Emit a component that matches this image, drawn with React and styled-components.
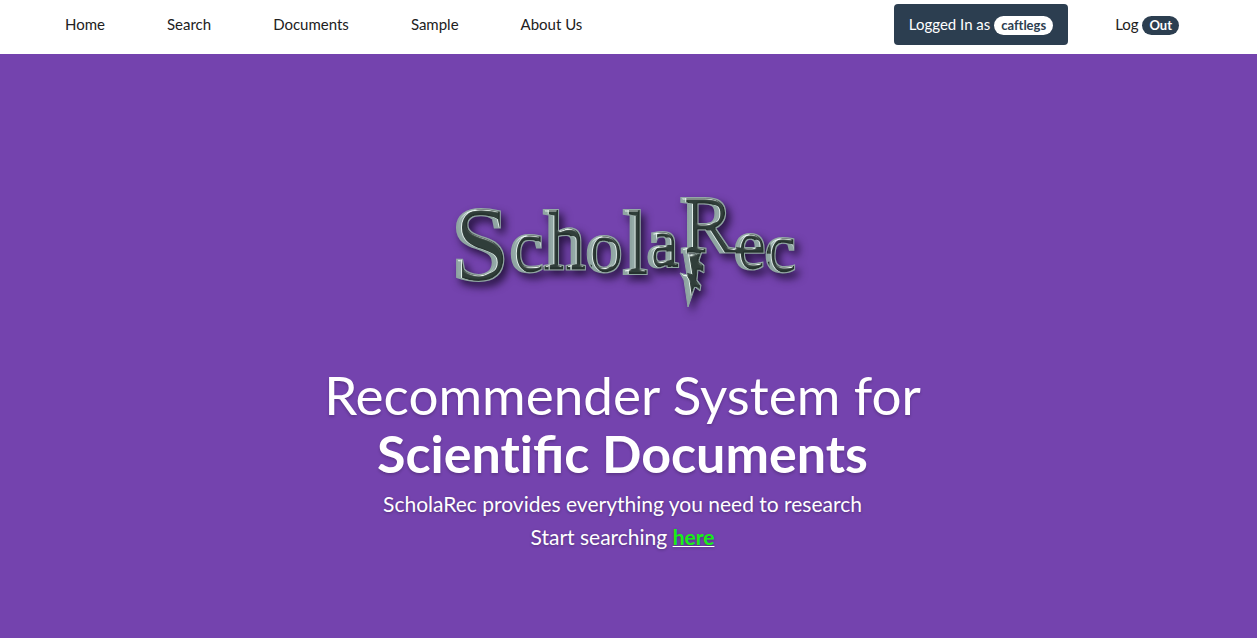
import React from "react";
import styled, { createGlobalStyle } from "styled-components";

const GlobalStyle = createGlobalStyle`
  *, *::before, *::after { box-sizing: border-box; }
  body {
    margin: 0;
    background: #7443ae;
    color: #212121;
    font-family: Lato, "Liberation Sans", sans-serif;
    font-size: 15px;
    line-height: 21px;
  }
  #root { min-height: 100vh; display: flex; flex-direction: column; }
`;

const NavBar = styled.header`
  display: flex;
  justify-content: space-between;
  align-items: flex-start;
  min-height: 54px;
  padding: 4px 78px 0 65px;
  background: #fff;
`;

const NavLinks = styled.nav`
  display: flex;
  gap: 62px;
  padding: 10px 0;
`;

const NavLink = styled.a`
  color: #212121;
  text-decoration: none;
`;

const Account = styled.div`
  display: flex;
  align-items: center;
  gap: 47px;
`;

const UserButton = styled.button`
  padding: 10px 15px;
  border: 0;
  border-radius: 4px;
  background: #2c3e50;
  color: #fff;
  font: inherit;
  cursor: pointer;
`;

const Pill = styled.span`
  display: inline-block;
  padding: 0 7px;
  border-radius: 10px;
  background: ${({ $light }) => ($light ? "#fff" : "#2c3e50")};
  color: ${({ $light }) => ($light ? "#2c3e50" : "#fff")};
  font-size: 13px;
  font-weight: 700;
  font-variant-ligatures: none;
  line-height: 19px;
`;

const Hero = styled.main`
  flex: 1;
  display: flex;
  flex-direction: column;
  align-items: center;
  padding: 116px 12px 80px 0;
  background: #7443ae;
  color: #fff;
  text-align: center;
`;

const Logo = styled.svg`
  display: block;
  width: 360px;
  height: 150px;
  margin-bottom: 46px;
  overflow: visible;
`;

const Title = styled.h1`
  margin: 0 0 5px;
  font-size: 53px;
  font-weight: 400;
  line-height: 58px;
  text-shadow: 0 2px 3px rgba(0, 0, 0, 0.2);
`;

const TitleStrong = styled.strong`
  font-size: 52px;
`;

const PlainLetters = styled.span`
  font-variant-ligatures: none;
`;

const Lead = styled.p`
  margin: 0;
  font-size: 21px;
  line-height: 33px;
  text-shadow: 0 1px 3px rgba(0, 0, 0, 0.3);
`;

const SearchLink = styled.a`
  color: #18f018;
  font-weight: 700;
  text-decoration: underline 1px #fff;
`;

const links = ["Home", "Search", "Documents", "Sample", "About Us"];

const letters = [
  ["S", 8, 109, 104],
  ["c", 67, 101, 74],
  ["h", 101, 98, 82],
  ["o", 143, 101, 72],
  ["l", 180, 103, 88],
  ["a", 204, 96, 70],
  ["R", 237, 82, 80],
  ["e", 291, 98, 70],
  ["c", 322, 101, 68],
];

function ScholaRecLogo() {
  return (
    <Logo viewBox="0 0 360 150" role="img" aria-label="ScholaRec">
      <defs>
        <filter id="bevel" filterUnits="userSpaceOnUse" x="0" y="0" width="380" height="160" colorInterpolationFilters="sRGB">
          <feMorphology in="SourceAlpha" operator="erode" radius="1" result="inner" />
          <feOffset in="SourceAlpha" dx="5" dy="0" result="ridgeShift" />
          <feFlood floodColor="#e2efea" />
          <feComposite in2="ridgeShift" operator="in" />
          <feComposite in2="inner" operator="in" result="ridge" />
          <feOffset in="SourceAlpha" dx="6" dy="0" result="shifted" />
          <feFlood floodColor="#26332f" />
          <feComposite in2="shifted" operator="in" />
          <feComposite in2="inner" operator="in" result="darkFacet" />
          <feGaussianBlur in="SourceAlpha" stdDeviation="1" result="height" />
          <feSpecularLighting in="height" surfaceScale="3" specularConstant="1" specularExponent="20" lightingColor="#eef8f4" result="shine">
            <feDistantLight azimuth="260" elevation="30" />
          </feSpecularLighting>
          <feComposite in="shine" in2="SourceAlpha" operator="in" result="edge" />
          <feMerge result="metal">
            <feMergeNode in="SourceGraphic" />
            <feMergeNode in="ridge" />
            <feMergeNode in="darkFacet" />
            <feMergeNode in="edge" />
          </feMerge>
          <feDropShadow in="metal" dx="4" dy="5" stdDeviation="4" floodColor="#170b2a" floodOpacity="0.85" />
        </filter>
      </defs>
      <g filter="url(#bevel)" fill="#8fa5a2" stroke="#8fa5a2" strokeWidth="4" strokeLinejoin="miter">
        <text fontFamily="'Liberation Serif', serif">
          {letters.map(([glyph, x, y, size], i) => (
            <tspan key={i} x={x} y={y} fontSize={size}>{glyph}</tspan>
          ))}
        </text>
        <path strokeWidth="1" d="M240 80L247 85L259 82L256 91L261 95L261 103L255 100L254 110L258 115L257 121L252 117L245 137L241 110L237 103L244 105Z" />
      </g>
    </Logo>
  );
}

export default function App() {
  return (
    <>
      <GlobalStyle />
      <NavBar>
        <NavLinks aria-label="Main">
          {links.map((label) => (
            <NavLink key={label} href="#">{label}</NavLink>
          ))}
        </NavLinks>
        <Account>
          <UserButton type="button">Logged In as <Pill $light>caftlegs</Pill></UserButton>
          <NavLink href="#">Log <Pill>Out</Pill></NavLink>
        </Account>
      </NavBar>
      <Hero>
        <ScholaRecLogo />
        <Title>
          Recommender System for<br />
          <TitleStrong><PlainLetters>Scient</PlainLetters>ific Documents</TitleStrong>
        </Title>
        <Lead>
          ScholaRec provides everything you need to research<br />
          Start searching <SearchLink href="#">here</SearchLink>
        </Lead>
      </Hero>
    </>
  );
}
